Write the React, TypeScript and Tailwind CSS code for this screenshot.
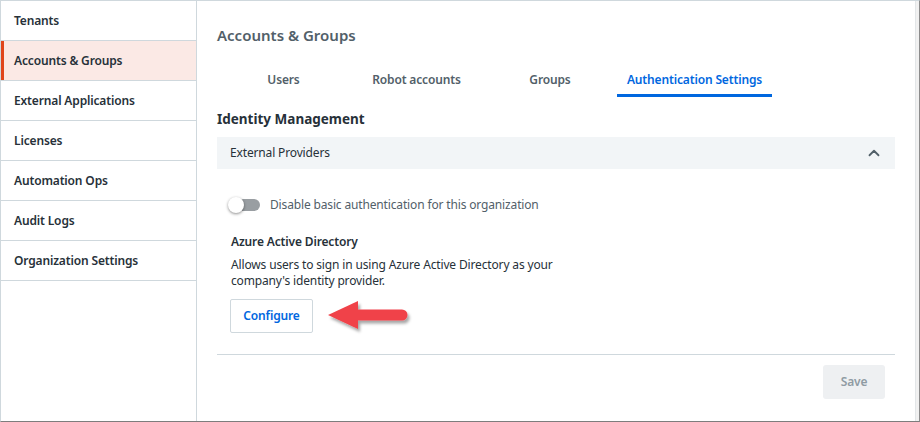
import React from "react";
import { ChevronUp } from "lucide-react";

const items = [
  "Tenants",
  "Accounts & Groups",
  "External Applications",
  "Licenses",
  "Automation Ops",
  "Audit Logs",
  "Organization Settings",
];

export default function App() {
  return (
    <div
      className="w-[920px] h-[422px] flex border-t border-l border-[#cfd8dd] border-b border-b-[#7d7d7d] border-r border-r-[#8c8c8c] bg-white overflow-hidden"
      style={{ fontFamily: '"Noto Sans", "Open Sans", sans-serif' }}
    >
      {/* Sidebar */}
      <div className="w-[196px] shrink-0 border-r border-[#cfd8dd] flex flex-col">
        {items.map((it) => {
          const active = it === "Accounts & Groups";
          return (
            <div
              key={it}
              className={
                active
                  ? "h-[40px] border-b border-[#cfd8dd] bg-[#fbe9e5] flex items-center relative pl-[13px] text-[12px] tracking-[-0.15px] font-semibold text-[#273139]"
                  : "h-[40px] border-b border-[#cfd8dd] flex items-center pl-[13px] text-[12px] tracking-[-0.15px] font-semibold text-[#273139]"
              }
            >
              {active && <div className="absolute left-0 top-0 bottom-0 w-[3px] bg-[#e0461c]" />}
              {it}
            </div>
          );
        })}
      </div>

      {/* Main */}
      <div className="flex-1 flex flex-col border-r border-[#e3e6e8] px-5 pt-[22px]">
        <div className="text-[15px] leading-[24px] font-semibold text-[#526069]">Accounts &amp; Groups</div>

        <div className="flex mt-[15px]">
          {[
            { t: "Users", w: "w-[133px]" },
            { t: "Robot accounts", w: "w-[133px]" },
            { t: "Groups", w: "w-[134px]" },
          ].map((tab) => (
            <div
              key={tab.t}
              className={`${tab.w} h-[35px] flex items-start justify-center pt-[9px] text-[12px] tracking-[-0.15px] leading-[18px] font-semibold text-[#526069]`}
            >
              {tab.t}
            </div>
          ))}
          <div className="w-[155px] h-[35px] flex items-start justify-center pt-[9px] text-[12px] tracking-[-0.15px] leading-[18px] font-semibold text-[#0067df] border-b-[3px] border-[#0067df]">
            Authentication Settings
          </div>
        </div>

        <div className="mt-[12px] text-[13.5px] leading-[20px] font-bold text-[#273139]">Identity Management</div>

        <div className="mt-[8px] h-[32px] bg-[#f2f5f7] flex items-center justify-between pl-[13px] pr-[12px]">
          <span className="text-[12px] tracking-[-0.15px] text-[#273139]">External Providers</span>
          <ChevronUp size={18} strokeWidth={2.4} color="#526069" />
        </div>

        <div className="pl-[11px]">
          <div className="mt-[27px] flex items-center h-[18px]">
            <div className="relative w-[32px] h-[18px] flex items-center">
              <div className="ml-[4px] w-[28px] h-[12px] rounded-full bg-[#999ea2]" />
              <div className="absolute left-0 top-[1px] w-[16px] h-[16px] rounded-full bg-white shadow-[0_1px_3px_rgba(0,0,0,0.45)]" />
            </div>
            <span className="ml-[10px] text-[12px] tracking-[-0.15px] text-[#526069]">Disable basic authentication for this organization</span>
          </div>

          <div className="mt-[19px] pl-[3px] text-[12px] tracking-[-0.15px] leading-[18px] font-semibold text-[#273139]">Azure Active Directory</div>
          <div className="mt-[6px] pl-[3px] w-[360px] text-[12px] tracking-[-0.15px] leading-[16px] text-[#273139]">
            Allows users to sign in using Azure Active Directory as your company's identity provider.
          </div>

          <div className="mt-[10px] pl-[2px] flex items-start">
            <button className="w-[83px] h-[34px] border border-[#cfd8dd] rounded-[2px] text-[12px] tracking-[-0.15px] font-semibold text-[#0067df] bg-white">
              Configure
            </button>
            <svg width="96" height="40" viewBox="0 0 96 40" className="ml-[13px] mt-[0px]">
              <defs>
                <filter id="sh" x="-20%" y="-30%" width="140%" height="160%">
                  <feDropShadow dx="2" dy="3" stdDeviation="1.8" floodColor="#000" floodOpacity="0.35" />
                </filter>
              </defs>
              <g filter="url(#sh)">
                <polygon points="2,16 32,2 32,30" fill="#f0434a" />
                <line x1="28" y1="16" x2="76" y2="16" stroke="#f0434a" strokeWidth="11" strokeLinecap="round" />
              </g>
            </svg>
          </div>
        </div>

        <div className="mt-[15px] border-t border-[#cfd8dd]" />
        <div className="mt-[10px] flex justify-end pr-[10px]">
          <button className="w-[62px] h-[34px] rounded-[3px] bg-[#eef0f2] text-[12px] tracking-[-0.15px] font-semibold text-[#8f9ba3]">Save</button>
        </div>
      </div>
      <div className="w-[3px] shrink-0 bg-[#f1f1f1]" />
    </div>
  );
}
